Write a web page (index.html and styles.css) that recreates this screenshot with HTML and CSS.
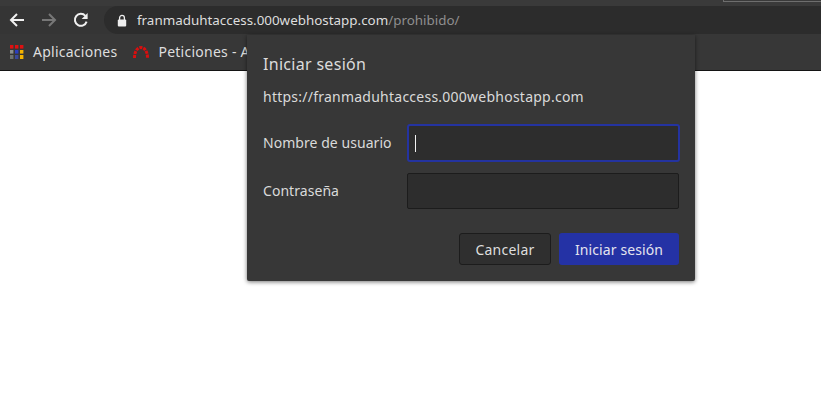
FILE: index.html
```html
<!DOCTYPE html>
<html lang="es">
<head>
<meta charset="utf-8">
<title>Iniciar sesión</title>
<link rel="stylesheet" href="styles.css">
</head>
<body>
<header class="chrome">
  <div class="tabstrip"><span class="tab-edge"></span></div>
  <div class="toolbar">
    <svg class="nav-icon" width="16" height="16" viewBox="0 0 16 16" fill="none" stroke="#f1f1f1" stroke-width="2"><path d="M15 8H2M8 2 2 8l6 6"/></svg>
    <svg class="nav-icon" width="16" height="16" viewBox="0 0 16 16" fill="none" stroke="#777" stroke-width="2"><path d="M1 8h13M8 2l6 6-6 6"/></svg>
    <svg class="nav-icon" width="16" height="16" viewBox="0 0 16 16" fill="none" stroke="#f1f1f1" stroke-width="2"><path d="M13.6 9.6A6 6 0 1 1 12.4 3.8"/><path d="M14.6 1v6h-6" fill="#f1f1f1" stroke="none"/></svg>
    <div class="omnibox">
      <svg class="lock" width="10" height="13" viewBox="0 0 10 13"><path fill="none" stroke="#eee" stroke-width="1.3" d="M2.6 6V3.8a2.4 2.4 0 0 1 4.8 0V6"/><rect x="0.8" y="5.4" width="8.4" height="7" rx="1" fill="#eee"/></svg>
      <span class="url">franmaduhtaccess.000webhostapp.com<span class="url-path">/prohibido/</span></span>
    </div>
  </div>
  <div class="bookmarks">
    <svg class="bm-icon" width="14" height="14" viewBox="0 0 14 14">
      <rect x="0" y="0" width="3.4" height="3.6" fill="#e01010"/><rect x="5" y="0" width="3.4" height="3.6" fill="#e01010"/><rect x="10" y="0" width="3.4" height="3.6" fill="#e01010"/>
      <rect x="0" y="5" width="3.4" height="3.6" fill="#8a8f8c"/><rect x="5" y="5" width="3.4" height="3.6" fill="#2a3fc0"/><rect x="10" y="5" width="3.4" height="3.6" fill="#f5b400"/>
      <rect x="0" y="10" width="3.4" height="4" fill="#6e736f"/><rect x="5" y="10" width="3.4" height="4" fill="#3a4a9a"/><rect x="10" y="10" width="3.4" height="4" fill="#f5b400"/>
    </svg>
    <span class="bm-label">Aplicaciones</span>
    <svg class="bm-icon bm-second" width="16" height="14" viewBox="0 0 16 14"><path d="M1.500 13C1.500 6 4.500 2.500 8 2.500s6.500 3.500 6.500 10.500" fill="none" stroke="#d80f0f" stroke-width="3" stroke-dasharray="3 1"/></svg>
    <span class="bm-label">Peticiones - A</span>
  </div>
</header>
<main class="page"></main>
<section class="dialog">
  <h1 class="dialog-title">Iniciar sesión</h1>
  <p class="dialog-origin">https://franmaduhtaccess.000webhostapp.com</p>
  <div class="form-grid">
    <label class="field-label">Nombre de usuario</label>
    <div class="input input-focus"><span class="caret"></span></div>
    <label class="field-label">Contraseña</label>
    <div class="input"></div>
  </div>
  <div class="actions">
    <button class="btn btn-cancel">Cancelar</button>
    <button class="btn btn-primary">Iniciar sesión</button>
  </div>
</section>
</body>
</html>
```
FILE: styles.css
```css
* { box-sizing: border-box; }
html, body { margin: 0; padding: 0; height: 100%; overflow: hidden; background: #fff; }
body { font-family: "Noto Sans", sans-serif; color: #e6e6e6; position: relative; }

.chrome { background: #373737; height: 71px; border-bottom: 1px solid #141414; }
.tabstrip { height: 6px; display: flex; justify-content: flex-end; background: #3a3a3a; }
.tab-edge { width: 98px; height: 2px; border-bottom: 1px solid #6e6e6e; border-left: 1px solid #6e6e6e; }

.toolbar { height: 28px; display: flex; align-items: center; padding-left: 9px; background: #353535; }
.nav-icon { flex: none; margin-right: 16px; }
.omnibox { flex: 1; height: 28px; margin-left: -1px; padding-left: 13px; background: #2c2c2c; border-radius: 14px 0 0 14px; display: flex; align-items: center; }
.lock { flex: none; margin-right: 10px; }
.url { font-size: 13.4px; color: #dedede; white-space: nowrap; }
.url-path { color: #8f8f8f; }

.bookmarks { height: 36px; display: flex; align-items: center; padding: 0 0 1px 10px; }
.bm-icon { flex: none; }
.bm-label { font-size: 14px; letter-spacing: 0.25px; color: #dedede; margin-left: 9px; white-space: nowrap; }
.bm-second { margin-left: 16px; }

.page { background: #fff; }

.dialog { position: absolute; left: 247px; top: 35px; width: 448px; height: 246px; padding: 19px 16px 0; background: #373737; box-shadow: 0 1px 4px rgba(0,0,0,.55); border-radius: 0 0 2px 2px; }
.dialog-title { margin: 0; font-size: 16px; font-weight: 400; line-height: 20px; letter-spacing: 0.3px; color: #dcdcdc; }
.dialog-origin { margin: 13px 0 0; font-size: 14px; line-height: 20px; letter-spacing: 0.24px; color: #dadada; white-space: nowrap; }
.form-grid { margin-top: 17px; display: grid; grid-template-columns: 144px 272px; row-gap: 11px; align-items: center; }
.field-label { font-size: 14px; line-height: 20px; letter-spacing: 0.05px; color: #dadada; }
.input { height: 36px; background: #2d2d2d; border: 1px solid #1c1c1c; border-radius: 2px; display: flex; align-items: center; padding-left: 7px; }
.input-focus { height: 38px; margin-right: -1px; border: 2px solid #2433a0; border-radius: 3px; padding-left: 6px; }
.caret { width: 1px; height: 17px; background: #f2f2f2; }

.actions { margin-top: 24px; display: flex; justify-content: flex-end; gap: 8px; }
.btn { font-family: inherit; font-size: 14px; height: 32px; border-radius: 3px; padding: 0; color: #dedede; }
.btn-cancel { width: 92px; background: #2f2f2f; border: 1px solid #1c1c1c; letter-spacing: 0.25px; }
.btn-primary { width: 120px; background: #2432a5; border: none; color: #e4e4ee; letter-spacing: 0.1px; }
```
